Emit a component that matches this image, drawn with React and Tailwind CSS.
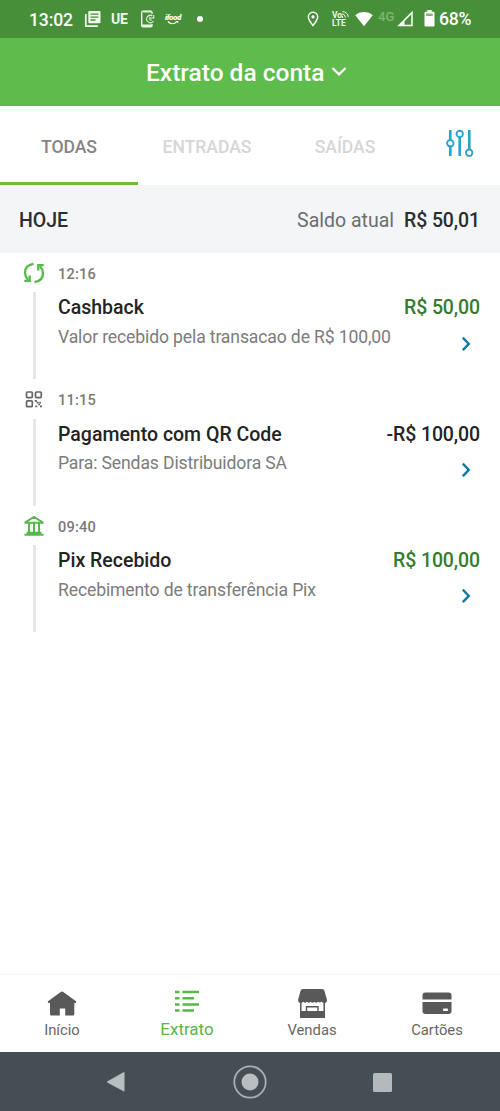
import React from "react";

const entries = [
  { time: "12:16", title: "Cashback", text: "Valor recebido pela transacao de R$ 100,00", value: "R$ 50,00", income: true, icon: "cycle" },
  { time: "11:15", title: "Pagamento com QR Code", text: "Para: Sendas Distribuidora SA", value: "-R$ 100,00", income: false, icon: "qr" },
  { time: "09:40", title: "Pix Recebido", text: "Recebimento de transferência Pix", value: "R$ 100,00", income: true, icon: "bank" },
];

function EntryIcon({ name }) {
  if (name === "cycle") {
    return (
      <svg className="h-6 w-6" viewBox="0 0 24 24" fill="none" stroke="#55b848" strokeWidth="2.3">
        <path d="M11.500 2.900Q2.800 4.200 3 12Q3.200 16 6 18.800" />
        <path d="M2.300 19.800h5.400v-5.200" />
        <path d="M12.500 21.100Q21.200 19.800 21 12Q20.800 8 18 5.200" />
        <path d="M21.700 4.200h-5.400v5.200" />
      </svg>
    );
  }
  if (name === "qr") {
    return (
      <svg className="h-6 w-6" viewBox="0 0 24 24" fill="none" stroke="#666" strokeWidth="1.7">
        <rect x="4.500" y="5" width="5.800" height="5.600" rx="1" />
        <rect x="13.500" y="5" width="5.800" height="5.600" rx="1" />
        <rect x="4.500" y="13.900" width="5.800" height="5.800" rx="1" />
        <path d="M12.700 13.900h2.200M14.600 15.700h2M17.300 15.700h1.700M16.200 17.500h1.900M13.300 19.400h2M18 19.400h2" />
      </svg>
    );
  }
  return (
    <svg className="h-6 w-6" viewBox="0 0 24 24" fill="none" stroke="#55b848" strokeWidth="2">
      <path d="M3.400 8.700V8.200L12 3l8.600 5.200v.500z" />
      <path d="M2.400 20.800h19.200M4.600 18.800h14.800M7 9V19M12 9V19M17 9V19" />
    </svg>
  );
}

function Entry({ entry }) {
  return (
    <li className="flex h-[126.4px] pt-[8px]">
      <div className="flex w-[58px] shrink-0 flex-col items-center pl-[10px]">
        <EntryIcon name={entry.icon} />
        <span className="mt-[7.500px] h-[87px] w-[3px] bg-[#e6e6e6]" />
      </div>
      <div className="flex grow flex-col pr-5">
        <p className="h-6 pt-px text-[14.6px] leading-[25px] tracking-[0.2px] font-medium text-[#7a7a7a]">{entry.time}</p>
        <div className="mt-[9px] flex h-7 items-center justify-between text-[19.5px] font-medium">
          <span className="text-[#242424]">{entry.title}</span>
          <span className={entry.income ? "tracking-[-0.12px] text-[#367b2b]" : "tracking-[-0.12px] text-[#242424]"}>{entry.value}</span>
        </div>
        <div className="flex justify-between pr-[8px]">
          <span className="mt-px h-7 whitespace-nowrap text-[17.600px] leading-7 tracking-[-0.140px] text-[#7c7c7c]">{entry.text}</span>
          <svg className="mt-[13.500px] h-4 w-3" viewBox="0 0 12 16" fill="none" stroke="#147aa0" strokeWidth="2.4">
            <path d="M2.800 1.700L8.800 7.900L2.800 14.100" />
          </svg>
        </div>
      </div>
    </li>
  );
}

function StatusBar() {
  return (
    <div className="flex h-[38px] items-center bg-[#479039] pl-[29px] text-white">
      <span className="w-[55px] pt-[3px] text-[17.600px] font-medium leading-none tracking-[-0.150px]">13:02</span>
      <svg className="h-[18px] w-[18px]" viewBox="0 0 18 18" fill="none" stroke="#f2faf0" strokeWidth="1.7">
        <path d="M1.800 4v12.200h12" />
        <rect x="4.300" y="1" width="12.200" height="12.200" rx="1" fill="#f2faf0" stroke="none" />
        <path d="M6.500 4.200h8M6.500 7.100h8M6.500 10h5" stroke="#479039" strokeWidth="1.300" />
      </svg>
      <span className="ml-[9px] w-[29px] text-[14px] font-bold leading-none tracking-[-0.2px] text-[#eef7eb]">UE</span>
      <svg className="h-[18px] w-[15px]" viewBox="0 0 15 18" fill="none" stroke="#e9f4e6" strokeWidth="1.400">
        <path d="M12 4V2.400a1.300 1.300 0 0 0-1.300-1.300H3a1.300 1.300 0 0 0-1.300 1.300v13a1.300 1.300 0 0 0 1.300 1.300h7.700a1.300 1.300 0 0 0 1.300-1.300V14" />
        <path d="M2 15.500h10M3.500 1.700H11" strokeWidth="1.800" />
        <path d="M12.300 5.800a3.700 3.700 0 1 0 1.200 5.200M9.800 6.800v2.700l1.800 1M13.700 5v3h-3" strokeWidth="1.100" />
      </svg>
      <span className="ml-[9px] flex w-[18px] flex-col items-center">
        <span className="text-[8px] font-black italic leading-[8px] tracking-[-0.4px]">ifood</span>
        <svg className="-mt-[1px] h-[4px] w-[12px]" viewBox="0 0 12 4" fill="none" stroke="#fff" strokeWidth="1.100">
          <path d="M1 .4c2 3.200 6.500 3.200 9 0M8.800.5h2v1.600" />
        </svg>
      </span>
      <span className="ml-[15px] mr-px h-[6px] w-[6px] rounded-full bg-white" />
      <svg className="ml-[103px] h-[16px] w-[12px]" viewBox="0 0 12 16" fill="none" stroke="#fff" strokeWidth="1.500">
        <path d="M6 14.600C3.200 11 1.300 8.400 1.300 6a4.700 4.700 0 0 1 9.400 0C10.700 8.400 8.800 11 6 14.600z" />
        <circle cx="6" cy="5.900" r="1.300" fill="#fff" strokeWidth="0.600" />
      </svg>
      <span className="ml-[13px] flex w-[22px] flex-col text-[8.500px] font-bold leading-[8px] text-[#edf7ea]">
        <span className="flex h-[8px]">
          Vo
          <svg className="h-[7px] w-[7px]" viewBox="0 0 7 7" fill="none" stroke="#edf7ea" strokeWidth="1">
            <path d="M0 2.800Q3 3 3.500 6.500M.5.500Q5.500 1 6.400 6M.5 5v2" />
          </svg>
        </span>
        <span>LTE</span>
      </span>
      <svg className="ml-[1px] -mt-px h-[16px] w-[18px]" viewBox="0 0 18 16" fill="#fff">
        <path d="M.3 4.200C5-.1 13-.1 17.700 4.200L9 15.200z" />
      </svg>
      <span className="ml-[5px] -mt-[6px] w-[19px] text-[13px] font-medium leading-none text-[#7fb574]">4G</span>
      <svg className="-mt-px h-[16px] w-[17px]" viewBox="0 0 17 16" fill="none" stroke="#fff" strokeWidth="1.500">
        <path d="M2 14.600L15 1.500v13.100z" />
        <path d="M1.500 14.800L7.500 8.500v6.300z" fill="#fff" stroke="none" />
      </svg>
      <svg className="ml-[10px] -mt-px h-[17px] w-[11px]" viewBox="0 0 11 17" fill="#fff">
        <path d="M3.300 0h4.400v1.700H9.500q1 0 1 1V15.600q0 1-1 1h-8q-1 0-1-1V2.700q0-1 1-1H3.300z" />
        <path d="M2.200 3.500h6.500V6H2.200z" fill="#7fb574" />
      </svg>
      <span className="ml-[4px] pt-[2px] text-[17.600px] font-medium leading-none tracking-[-0.3px]">68%</span>
    </div>
  );
}

function NavItem({ label, active, children }) {
  return (
    <div className="flex w-1/4 flex-col items-center pt-[12px]">
      <svg className="mr-[2px] h-[32px] w-[32px]" viewBox="0 0 32 32">{children}</svg>
      <span className={active ? "pr-px text-[17px] leading-5 text-[#55b848]" : "pt-px pr-px text-[14.800px] leading-5 text-[#666]"}>{label}</span>
    </div>
  );
}

export default function App() {
  return (
    <div className="flex h-[1111px] w-[500px] flex-col overflow-hidden bg-white font-['Roboto',sans-serif]">
      <StatusBar />
      <header className="flex h-[68px] items-center bg-[#5dbc4b] pl-[146px] text-white">
        <h1 className="pt-[2px] text-[24.500px] font-medium leading-none">Extrato da conta</h1>
        <svg className="ml-[7px] -mt-[2px] h-4 w-4" viewBox="0 0 16 16" fill="none" stroke="#fff" strokeWidth="2.300">
          <path d="M1.500 5L8 11.300L14.500 5" />
        </svg>
      </header>
      <nav className="flex h-[79px] text-[17.600px] font-medium leading-[82px] tracking-[-0.050px]">
        <span className="w-[138px] border-b-[3px] border-[#6abf3a] text-center text-[#858585]">TODAS</span>
        <span className="w-[138px] text-center text-[#d6d6d6]">ENTRADAS</span>
        <span className="w-[138px] text-center text-[#d6d6d6]">SAÍDAS</span>
        <svg className="ml-[32px] mt-[23px] h-[28px] w-[28px]" viewBox="0 0 28 28" fill="none" stroke="#2ba2c9" strokeWidth="2.600">
          <path d="M4.300 1v9M4.300 16.500V27M13.700 8V27M23.300 1v19.500" />
          <g strokeWidth="1.900"><circle cx="4.300" cy="14.200" r="3.200" /><circle cx="13.700" cy="4.900" r="3.200" /><circle cx="23.200" cy="23.700" r="3.200" /></g>
        </svg>
      </nav>
      <div className="flex h-[68px] items-center bg-[#f4f5f7] pl-[19px] pr-5 pt-[4px] text-[19.500px] font-medium text-[#2b2d30]">
        <span className="grow">HOJE</span>
        <span className="mr-[10px] font-normal text-[#6c6d70]">Saldo atual</span>
        <span className="tracking-[-0.120px]">R$ 50,01</span>
      </div>
      <ul className="grow">
        {entries.map((entry) => <Entry key={entry.time} entry={entry} />)}
      </ul>
      <nav className="flex h-[79px] border-t-2 border-[#f8f8f8]">
        <NavItem label="Início">
          <path d="M16 4.500Q16.700 4.500 17.300 5L30 14.300Q30.800 15.500 29.500 16H28.300V27Q28.300 28.500 27 28.500H19.200V21.500H13.800V28.500H5.500Q4 28.500 4 27V16H2.500Q1.200 15.500 2 14.300L14.700 5Q15.300 4.500 16 4.500z" fill="#595959" />
        </NavItem>
        <NavItem label="Extrato" active>
          <path d="M4 5h4.500M11.500 5h16.500M4 11.200h4.500M11.500 11.200h11.500M4 17.400h4.500M11.500 17.400h16.500M4 23.600h4.500M11.500 23.600h11.500" stroke="#55b848" strokeWidth="2.500" />
        </NavItem>
        <NavItem label="Vendas">
          <path d="M7 2H26Q28 2 28.500 4L31 13Q31 16 28.500 16Q26.500 16 25.500 14.500Q24 16.500 22 14.800Q20 16.500 18.500 14.800Q16.500 16.500 14.500 14.800Q12.500 16.500 11 14.800Q9 16.500 7.500 14.800Q6 16 4 16Q2 15.500 2 13L4.500 4Q5 2 7 2z" fill="#595959" />
          <path d="M4.800 14V30M28.200 14V30" stroke="#595959" strokeWidth="1.500" />
          <path d="M4 24H29V31H4z" fill="#595959" />
          <path d="M10.500 24V19.700H22V24" fill="none" stroke="#595959" strokeWidth="1.400" />
        </NavItem>
        <NavItem label="Cartões">
          <path d="M4.500 5.500H27.500Q30.500 5.500 30.500 8.500V12.500H1.500V8.500Q1.500 5.500 4.500 5.500zM1.500 15H30.500V24Q30.500 27 27.500 27H4.500Q1.500 27 1.500 24z" fill="#595959" />
          <rect x="22" y="21.500" width="5" height="2.500" rx="1" fill="#fff" />
        </NavItem>
      </nav>
      <div className="flex h-[59px] items-center bg-[#454e54]">
        <svg className="ml-[106px] h-[22px] w-[20px]" viewBox="0 0 20 22" fill="#b9bec0">
          <path d="M1.200 10.500L17.500 1.200Q18.500.8 18.500 2V19.500Q18.500 20.800 17.500 20.300L1.200 11.500Q.5 11 1.200 10.500z" />
        </svg>
        <svg className="ml-[106px] h-[36px] w-[36px]" viewBox="0 0 36 36">
          <circle cx="18" cy="18" r="15.700" fill="none" stroke="#a9afb2" strokeWidth="1.800" />
          <circle cx="18" cy="18" r="8.500" fill="#b9bec0" />
        </svg>
        <span className="ml-[105px] mt-px h-[19px] w-[19px] rounded-[1.500px] bg-[#b4babc]" />
      </div>
    </div>
  );
}
